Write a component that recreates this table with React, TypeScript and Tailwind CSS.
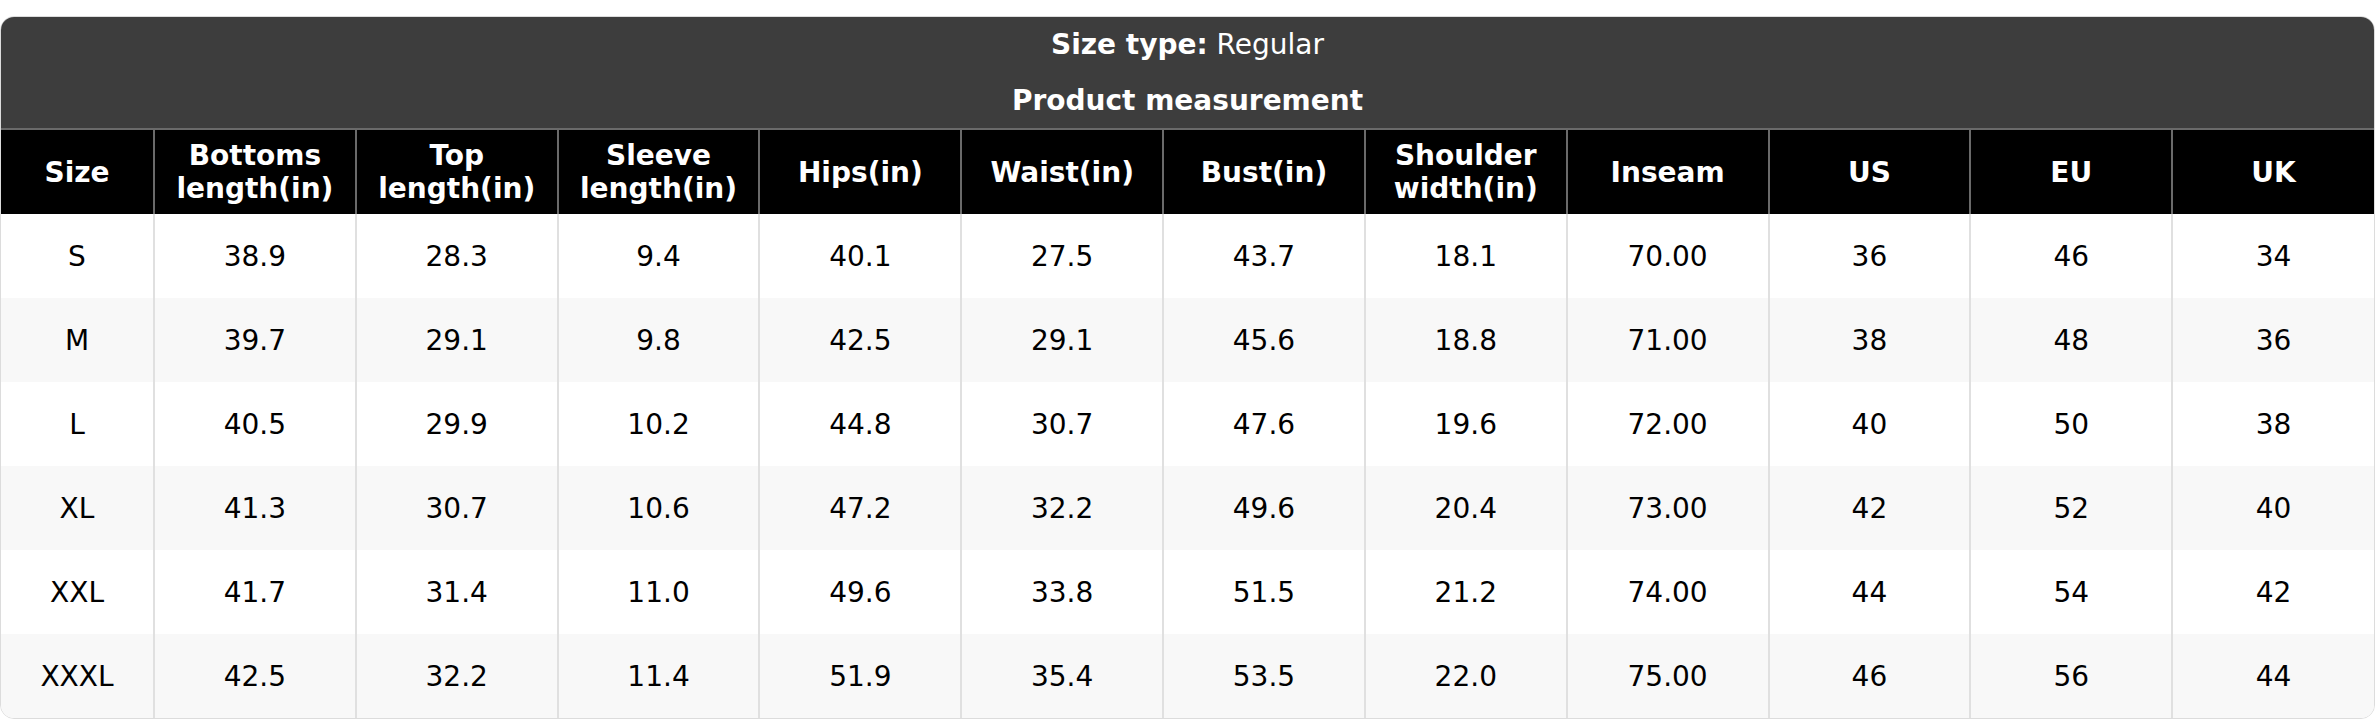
const columns = [
  ["Size"],
  ["Bottoms", "length(in)"],
  ["Top", "length(in)"],
  ["Sleeve", "length(in)"],
  ["Hips(in)"],
  ["Waist(in)"],
  ["Bust(in)"],
  ["Shoulder", "width(in)"],
  ["Inseam"],
  ["US"],
  ["EU"],
  ["UK"],
];

const rows = [
  ["S", "38.9", "28.3", "9.4", "40.1", "27.5", "43.7", "18.1", "70.00", "36", "46", "34"],
  ["M", "39.7", "29.1", "9.8", "42.5", "29.1", "45.6", "18.8", "71.00", "38", "48", "36"],
  ["L", "40.5", "29.9", "10.2", "44.8", "30.7", "47.6", "19.6", "72.00", "40", "50", "38"],
  ["XL", "41.3", "30.7", "10.6", "47.2", "32.2", "49.6", "20.4", "73.00", "42", "52", "40"],
  ["XXL", "41.7", "31.4", "11.0", "49.6", "33.8", "51.5", "21.2", "74.00", "44", "54", "42"],
  ["XXXL", "42.5", "32.2", "11.4", "51.9", "35.4", "53.5", "22.0", "75.00", "46", "56", "44"],
];

export default function App() {
  return (
    <div className="bg-white pt-[16px] font-['DejaVu_Sans',sans-serif] text-[28px] leading-[33px]">
      <div className="w-[2375px] overflow-hidden rounded-[14px] border border-[#dcdcdc]">
        <div className="bg-[#3d3d3d] text-center text-white">
          <div className="flex h-[55px] items-center justify-center">
            <span className="font-bold">Size type:</span>&nbsp;Regular
          </div>
          <div className="flex h-[56px] items-center justify-center font-bold">
            Product measurement
          </div>
        </div>
        <table className="w-full table-fixed border-collapse">
          <colgroup>
            <col className="w-[153px]" />
            {columns.slice(1).map((_, i) => (
              <col key={i} />
            ))}
          </colgroup>
          <thead>
            <tr className="h-[85px] border-t-2 border-[#6a6a6a] bg-black text-white">
              {columns.map((c, i) => (
                <th
                  key={i}
                  className={`p-0 text-center align-middle font-bold ${
                    i > 0 ? "border-l-2 border-[#6a6a6a]" : ""
                  }`}
                >
                  {c.map((line, j) => (
                    <div key={j}>{line}</div>
                  ))}
                </th>
              ))}
            </tr>
          </thead>
          <tbody>
            {rows.map((r, ri) => (
              <tr
                key={ri}
                className={`h-[84px] ${ri % 2 === 1 ? "bg-[#f8f8f8]" : "bg-white"}`}
              >
                {r.map((v, ci) => (
                  <td
                    key={ci}
                    className={`p-0 text-center align-middle text-black ${
                      ci > 0 ? "border-l-2 border-[#e0e0e0]" : ""
                    }`}
                  >
                    {v}
                  </td>
                ))}
              </tr>
            ))}
          </tbody>
        </table>
      </div>
    </div>
  );
}
